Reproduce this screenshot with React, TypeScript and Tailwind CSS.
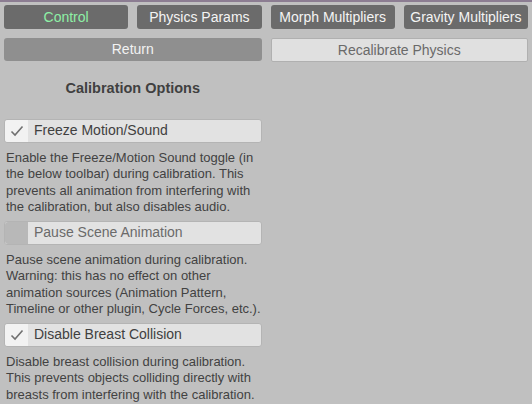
import React from "react";

const tabs = [
  { label: "Control", active: true },
  { label: "Physics Params", active: false },
  { label: "Morph Multipliers", active: false },
  { label: "Gravity Multipliers", active: false },
];

const options = [
  {
    label: "Freeze Motion/Sound",
    checked: true,
    text: "Enable the Freeze/Motion Sound toggle (in the below toolbar) during calibration. This prevents all animation from interfering with the calibration, but also disables audio.",
  },
  {
    label: "Pause Scene Animation",
    checked: false,
    text: "Pause scene animation during calibration. Warning: this has no effect on other animation sources (Animation Pattern, Timeline or other plugin, Cycle Forces, etc.).",
  },
  {
    label: "Disable Breast Collision",
    checked: true,
    text: "Disable breast collision during calibration. This prevents objects colliding directly with breasts from interfering with the calibration.",
  },
];

function Toggle({ label, checked }: { label: string; checked: boolean }) {
  return (
    <div className="flex h-[24px] items-center rounded-[3px] border border-[#b4b4b4] bg-[#e2e2e2]">
      <div
        className={
          "flex h-full w-[23px] items-center justify-center rounded-l-[3px] " +
          (checked ? "bg-[#f2f2f2]" : "bg-[#b8b8b8]")
        }
      >
        {checked && (
          <svg width="14" height="12" viewBox="0 0 14 12">
            <path d="M1.5 6.5 L5 10 L12.5 1.5" fill="none" stroke="#707070" strokeWidth="1.6" />
          </svg>
        )}
      </div>
      <span className={"ml-[6px] text-[14px] " + (checked ? "text-[#404040]" : "text-[#6a6a6a]")}>
        {label}
      </span>
    </div>
  );
}

export default function App() {
  return (
    <div
      className="h-[404px] w-[532px] overflow-hidden border-t-2 border-[#8c7d92] bg-[#c0c0c0]"
      style={{ fontFamily: '"Liberation Sans", Arial, sans-serif' }}
    >
      <div className="grid grid-cols-4 gap-x-[9px] px-[4px] pt-[3px]">
        {tabs.map((t) => (
          <div
            key={t.label}
            className={
              "flex h-[24px] items-center justify-center rounded-[3px] bg-[#6b6b6b] text-[14px] " +
              (t.active ? "text-[#8ef0a6]" : "text-[#f4f4f4]")
            }
          >
            {t.label}
          </div>
        ))}
      </div>

      <div className="mt-[9px] grid grid-cols-2 gap-x-[9px] px-[4px]">
        <div className="flex h-[23px] items-center justify-center rounded-[3px] bg-[#8f8f8f] text-[14px] text-[#f2f2f2]">
          Return
        </div>
        <div className="flex h-[24px] items-center justify-center rounded-[2px] border border-[#b0b0b0] bg-[#e0e0e0] text-[14px] text-[#6a6a6a]">
          Recalibrate Physics
        </div>
      </div>

      <div className="grid grid-cols-2 gap-x-[9px] px-[4px]">
        <div>
          <div className="pt-[16px] pb-[19px] text-center text-[14.5px] font-bold text-[#404040]">
            Calibration Options
          </div>
          <div className="flex flex-col gap-[5px]">
            {options.map((o) => (
              <div key={o.label}>
                <Toggle label={o.label} checked={o.checked} />
                <p className="mt-[7px] min-h-[66px] pl-[2px] text-[13px] leading-[16.5px] text-[#424242]">
                  {o.text}
                </p>
              </div>
            ))}
          </div>
        </div>
        <div />
      </div>
    </div>
  );
}
